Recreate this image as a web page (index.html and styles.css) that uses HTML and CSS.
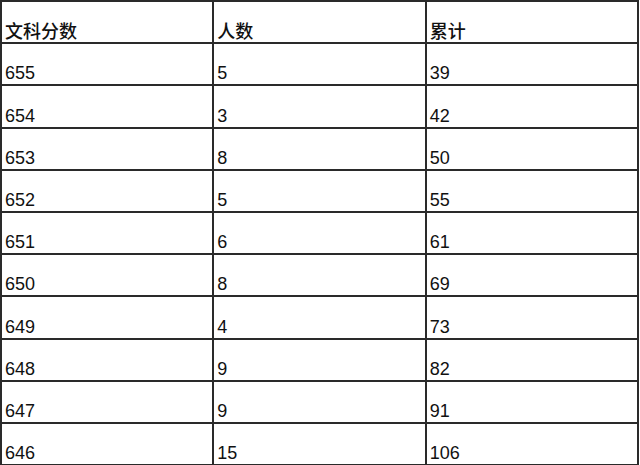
FILE: index.html
```html
<!DOCTYPE html>
<html lang="zh">
<head>
<meta charset="utf-8">
<title>文科分数</title>
<link rel="stylesheet" href="styles.css">
</head>
<body>
<table class="score-table">
  <tr class="head"><td>文科分数</td><td>人数</td><td>累计</td></tr>
  <tr><td>655</td><td>5</td><td>39</td></tr>
  <tr><td>654</td><td>3</td><td>42</td></tr>
  <tr><td>653</td><td>8</td><td>50</td></tr>
  <tr><td>652</td><td>5</td><td>55</td></tr>
  <tr><td>651</td><td>6</td><td>61</td></tr>
  <tr><td>650</td><td>8</td><td>69</td></tr>
  <tr><td>649</td><td>4</td><td>73</td></tr>
  <tr><td>648</td><td>9</td><td>82</td></tr>
  <tr><td>647</td><td>9</td><td>91</td></tr>
  <tr><td>646</td><td>15</td><td>106</td></tr>
</table>
</body>
</html>
```
FILE: styles.css
```css
html, body {
  margin: 0;
  padding: 0;
  background: #ffffff;
}
.score-table {
  border-collapse: collapse;
  width: 639px;
  table-layout: fixed;
  font-family: "Liberation Sans", Arial, "Noto Sans CJK SC", sans-serif;
  font-size: 18px;
  color: #111;
}
.score-table td {
  border: 2px solid #2a2a2a;
  height: 39.2px;
  padding: 0 3px 1px 3px;
  vertical-align: bottom;
  line-height: 20px;
}
.head td {
  font-family: "Noto Sans CJK SC", sans-serif;
  font-weight: 500;
  line-height: 22px;
}
```
